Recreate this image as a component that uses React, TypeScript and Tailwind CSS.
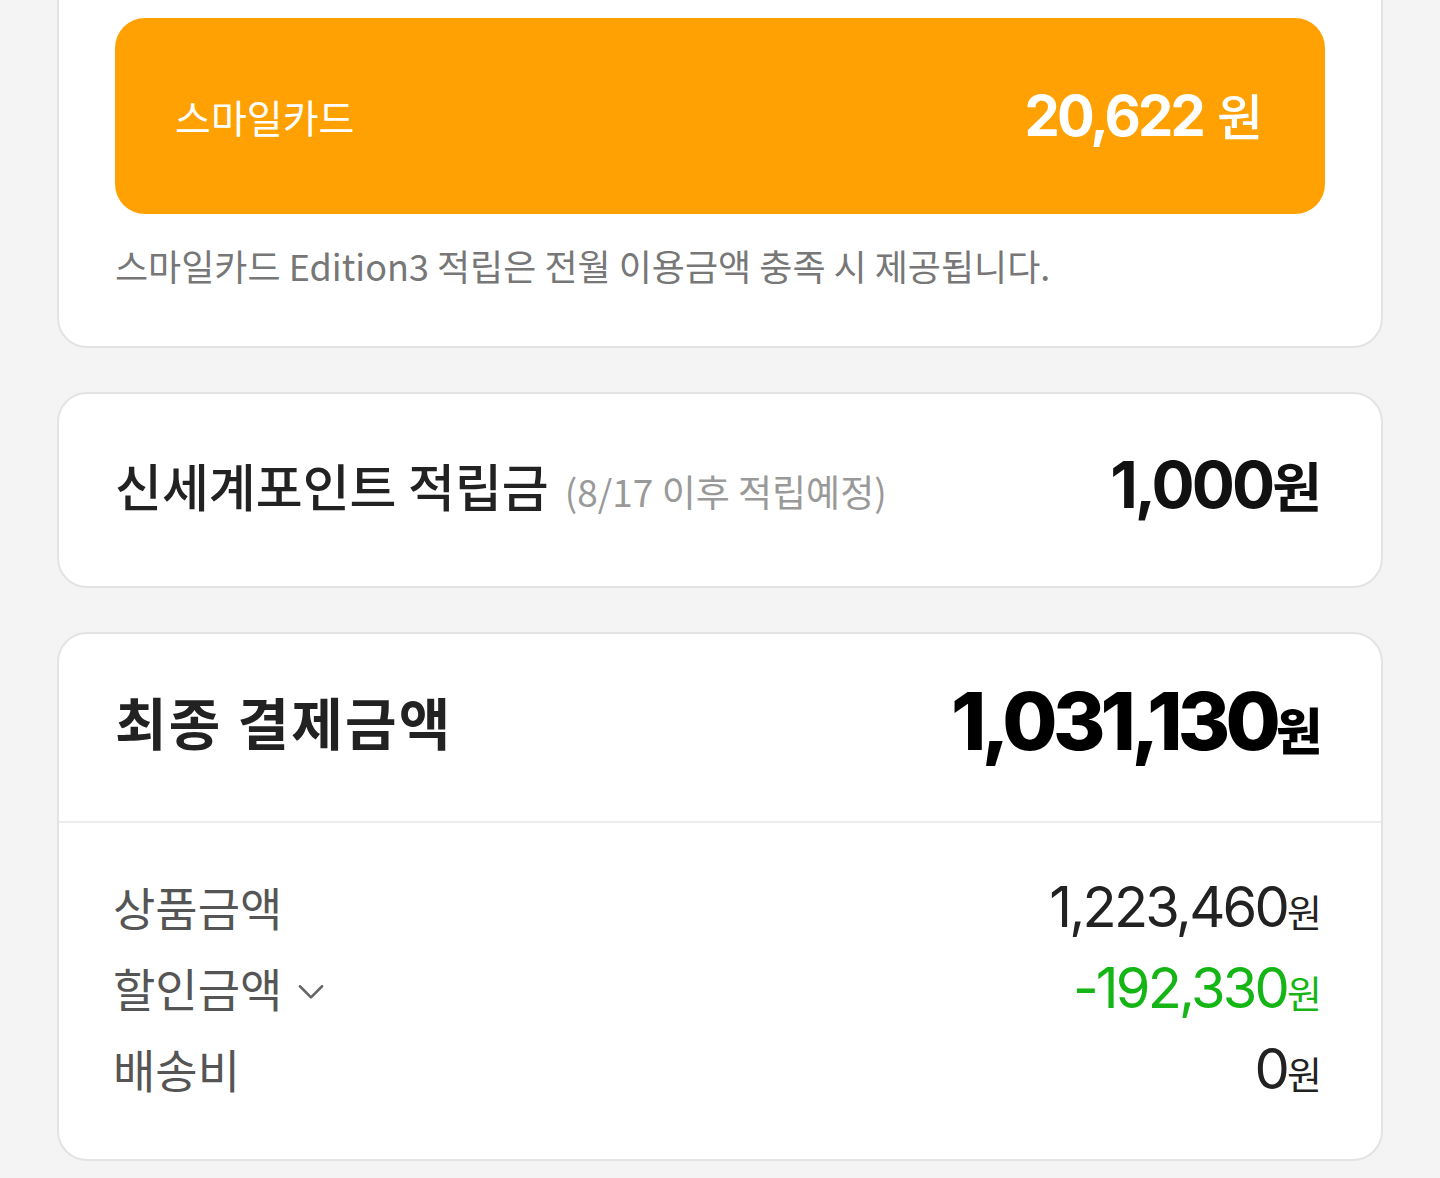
import React from "react";

const kr = "font-['Noto_Sans_CJK_KR','Noto_Sans',sans-serif]";
const num = "font-['Inter','Noto_Sans_CJK_KR',sans-serif]";

const rows = [
  { label: "상품금액", value: "1,223,460", color: "text-[#222]", toggle: false },
  { label: "할인금액", value: "-192,330", color: "text-[#16b516]", toggle: true },
  { label: "배송비", value: "0", color: "text-[#222]", toggle: false },
];

function Chevron() {
  return (
    <svg width="38" height="38" viewBox="0 0 24 24" fill="none" stroke="#666" strokeWidth="1.6" strokeLinecap="round" strokeLinejoin="round" className="ml-[10px] mt-[6px]">
      <path d="M5 9l7 7 7-7" />
    </svg>
  );
}

export default function App() {
  return (
    <div className={`min-h-[1178px] w-[1440px] overflow-hidden bg-[#f4f4f4] ${kr}`}>
      {/* smile card section */}
      <div className="mx-[57px] -mt-[40px] rounded-b-[30px] border-2 border-[#e3e3e3] bg-white px-[56px] pt-[56px] pb-[60px]">
        <div className="flex h-[196px] items-center justify-between rounded-[30px] bg-[#ffa102] pl-[60px] pr-[62px]">
          <span className="text-[39px] leading-none text-white">스마일카드</span>
          <span className="flex items-baseline text-white">
            <span className={`${num} text-[56px] font-bold leading-none tracking-[-0.05em]`}>20,622</span>
            <span className="ml-[14px] text-[50px] font-medium leading-none">원</span>
          </span>
        </div>
        <p className="mt-[30px] text-[36px] leading-[42px] text-[#777]">
          스마일카드 Edition3 적립은 전월 이용금액 충족 시 제공됩니다.
        </p>
      </div>

      {/* shinsegae point */}
      <div className="mx-[57px] mt-[44px] flex h-[196px] items-center justify-between rounded-[30px] border-2 border-[#e3e3e3] bg-white pb-[10px] pl-[56px] pr-[59px]">
        <div className="flex items-baseline">
          <span className="text-[51px] font-medium text-[#222]">신세계포인트 적립금</span>
          <span className="ml-[16px] text-[37px] text-[#999]">(8/17 이후 적립예정)</span>
        </div>
        <div className="flex items-baseline text-[#111]">
          <span className={`${num} text-[64px] font-bold tracking-[-0.045em]`}>1,000</span>
          <span className="text-[54px] font-bold">원</span>
        </div>
      </div>

      {/* total */}
      <div className="mx-[57px] mt-[44px] rounded-[30px] border-2 border-[#e3e3e3] bg-white">
        <div className="flex h-[189px] items-center justify-between border-b-2 border-[#ececec] pb-[14px] pl-[56px] pr-[59px]">
          <span className="text-[56px] font-bold text-[#222] tracking-[0.04em]">최종 결제금액</span>
          <div className="flex items-baseline text-black">
            <span className={`${num} text-[80px] font-extrabold tracking-[-0.06em]`}>1,031,130</span>
            <span className="text-[50px] font-black">원</span>
          </div>
        </div>
        <div className="flex flex-col gap-[18px] pl-[54px] pr-[59px] pt-[52px] pb-[59px]">
          {rows.map((r) => (
            <div key={r.label} className="flex h-[63px] items-center justify-between">
              <div className="flex items-center">
                <span className="text-[46px] text-[#555]">{r.label}</span>
                {r.toggle && <Chevron />}
              </div>
              <div className={`flex items-baseline ${r.color}`}>
                <span className={`${num} text-[56px] tracking-[-0.05em]`}>{r.value}</span>
                <span className="text-[38px]">원</span>
              </div>
            </div>
          ))}
        </div>
      </div>
    </div>
  );
}
